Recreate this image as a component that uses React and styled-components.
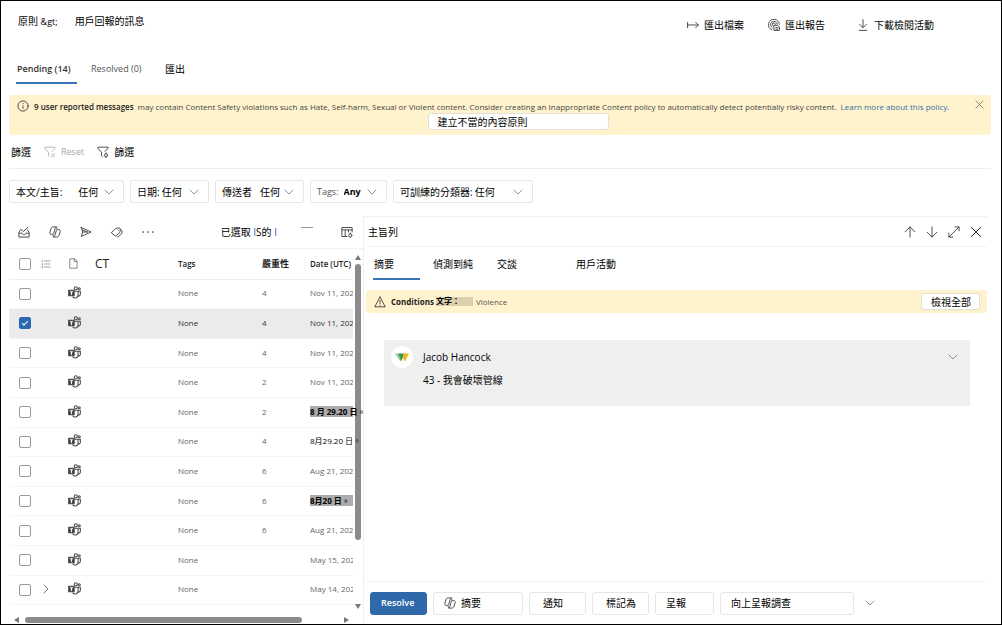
import React, { useState } from 'react';
import styled, { createGlobalStyle, css } from 'styled-components';

const GlobalStyle = createGlobalStyle`
  *, *::before, *::after { box-sizing: border-box; }
  body {
    margin: 0;
    background: #fff;
    color: #000;
    font: 400 10px/14px "Open Sans", "Noto Sans CJK TC", sans-serif;
  }
  button, input, select { font: inherit; color: inherit; }
`;

/* ---------- icons ---------- */

const Svg = styled.svg`
  display: block;
  flex: none;
  width: ${(p) => p.$size || 12}px;
  height: ${(p) => p.$size || 12}px;
  fill: none;
  stroke: ${(p) => p.$color || '#484848'};
  stroke-width: ${(p) => p.$weight || 1.6};
  stroke-linecap: round;
  stroke-linejoin: round;
`;

const Icon = ({ size, color, weight, children }) => (
  <Svg viewBox="0 0 20 20" $size={size} $color={color} $weight={weight} aria-hidden="true">
    {children}
  </Svg>
);

const ChevronDown = (p) => <Icon size={10} color="#777" {...p}><path d="M2 6l8 8 8-8" /></Icon>;
const ChevronRight = (p) => <Icon size={10} color="#555" {...p}><path d="M6 2l8 8-8 8" /></Icon>;
const CloseIcon = (p) => <Icon {...p}><path d="M2 2l16 16M18 2 2 18" /></Icon>;
const ArrowUp = (p) => <Icon {...p}><path d="M10 18.500V1.500M2 9.500l8-8 8 8" /></Icon>;
const ArrowDown = (p) => <Icon {...p}><path d="M10 1.500v17M2 10.500l8 8 8-8" /></Icon>;
const ExpandIcon = (p) => <Icon {...p}><path d="M2 18 18 2M12 1.500h6.500V8M1.500 12v6.500H8" /></Icon>;
const ExportIcon = (p) => <Icon {...p}><path d="M1 5.500v9M1 10h18M14.500 5.500 19 10l-4.500 4.500" /></Icon>;
const DownloadIcon = (p) => <Icon {...p}><path d="M10 1v13M4.500 9l5.500 5.500L15.500 9M4 19h12" /></Icon>;
const InfoIcon = (p) => <Icon {...p}><circle cx="10" cy="10" r="8.500" /><path d="M10 9.500v4.500M10 6v.3" /></Icon>;
const WarningIcon = (p) => (
  <Icon {...p}><path d="M10 1.800 18.800 18H1.200L10 1.800ZM10 7.500v5M10 15.200v.3" /></Icon>
);
const ReportIcon = (p) => (
  <Icon {...p}>
    <path d="M6.500 18A9 9 0 1 1 18.800 9M6.800 14.500A5.800 5.800 0 1 1 15.600 8.500M9 11.500A2.600 2.600 0 1 1 12.300 9" />
    <path d="M10.500 10.500h5.500l3 3V19h-8.500zM13 14.500h3.500M13 17h3.500" />
  </Icon>
);
const FilterIcon = ({ reset, ...p }) => (
  <Icon {...p}>
    <path d="M9 17.500 7.500 16v-5.500L1.500 4V2h17v2L13 9" />
    {reset ? <path d="M12.500 13l5 5M17.500 13l-5 5" /> : (
      <><circle cx="15" cy="15.500" r="2.600" /><path d="M15 11.500v1.400M15 18.100v1.400" /></>
    )}
  </Icon>
);
const InboxIcon = (p) => (
  <Icon {...p}>
    <path d="M4 6.500 1.500 11v7.500h17V11L16 6.500M1.500 12H7c.5 1.700 1.500 2.500 3 2.500s2.500-.8 3-2.500h5.500M5 5.500 9 9.500 16.500 2" />
  </Icon>
);
const CopilotIcon = (p) => (
  <Icon {...p}>
    <path d="M13.500 6 13 4C12.600 2.400 11.800 1.500 10.200 1.500H7C5 1.500 3.900 2.600 3.200 4.800L1.500 10.200C.8 12.600 1.800 14 4 14h1.200c1.500 0 2.300-.7 2.800-2.400l2.300-7.400c.5-1.700 1.200-2.700 2.700-2.700" />
    <path d="M6.500 14 7 16c.4 1.600 1.200 2.500 2.800 2.500H13c2 0 3.100-1.100 3.800-3.300l1.700-5.400C19.200 7.400 18.200 6 16 6h-1.200c-1.500 0-2.300.7-2.800 2.400l-2.300 7.400c-.5 1.700-1.200 2.700-2.700 2.700" />
  </Icon>
);
const SendIcon = (p) => <Icon {...p}><path d="M2 2.500 18.500 10 2 17.500 4.500 10 2 2.500ZM4.500 10h8M4 6.500l8 3.500" /></Icon>;
const TagIcon = (p) => (
  <Icon {...p}>
    <path d="M1.200 10.500 8 4l6-.8 1.500 1.300-.5 6-6.300 6c-.5.500-1.200.5-1.700 0L1.200 12c-.4-.4-.4-1 0-1.500Z" />
    <path d="M16 5.500l2.500 2.500-.5 4.500-5.500 5.200c-.8.600-1.600.600-2.300 0" /><path d="M12 6.800v.3" />
  </Icon>
);
const MoreIcon = (p) => <Icon {...p}><path d="M2 10h.1M10 10h.1M18 10h.1" /></Icon>;
const ColumnsIcon = (p) => (
  <Icon {...p}>
    <path d="M10 17.500H1.500v-15h17V10M1.500 6.500h17M7 6.500v11M12.500 6.500V10" />
    <circle cx="15.500" cy="15.500" r="2.600" /><path d="M15.500 11.700v1M15.500 18.300v1" />
  </Icon>
);
const ListIcon = (p) => <Icon {...p}><path d="M7 4h11M7 10h11M7 16h11M2.500 2.500v3M2 9.500h1v2H2M2 15h1.500v2.500H2" /></Icon>;
const FileIcon = (p) => <Icon {...p}><path d="M4 1.500h8l4.500 4.500v12.500H4zM11.500 1.500v5h5" /></Icon>;
const TeamsIcon = (p) => (
  <Icon {...p}>
    <circle cx="12" cy="3.500" r="2.400" /><circle cx="17.300" cy="4.300" r="1.600" />
    <path d="M10.500 8h5v6.500a4.500 4.500 0 0 1-8 2.300M15.500 8H19v4.500a3 3 0 0 1-3.500 3" />
    <path d="M1 6.500h8.500V15H1z" fill="#444" /><path d="M3.500 9h3.600M5.300 9v4" stroke="#fff" />
  </Icon>
);

/* ---------- page ---------- */

const Page = styled.div`
  min-height: 100vh;
  display: flex;
  flex-direction: column;
  border: 1px solid #000;
  padding: 0 10px 0 8px;
`;

const PageHeader = styled.header`
  display: flex;
  align-items: flex-start;
  justify-content: space-between;
  height: 54px;
  padding: 13px 57px 0 9px;
`;

const Breadcrumb = styled.nav`
  display: flex;
  gap: 17px;
`;

const CrumbLink = styled.a`
  color: inherit;
  text-decoration: none;
`;

const Separator = styled.span`
  font-size: 9px;
`;

const HeaderActions = styled.div`
  display: flex;
  gap: 24px;
  padding-top: 4px;
  > :last-child { margin-left: 8px; }
`;

const PlainButton = styled.button`
  display: inline-flex;
  align-items: center;
  gap: 5px;
  padding: 0;
  border: 0;
  background: none;
  color: ${(p) => (p.$muted ? '#a6a6a6' : '#000')};
  font-size: ${(p) => (p.$muted ? 9 : 10)}px;
  white-space: nowrap;
  cursor: pointer;
`;

const Tabs = styled.div`
  display: flex;
  gap: ${(p) => p.$gap}px;
  padding-left: 7px;
`;

const Tab = styled.button`
  padding: 0 1px;
  height: ${(p) => p.$height}px;
  min-width: ${(p) => p.$min || 0}px;
  border: 0;
  border-bottom: 2px solid ${(p) => (p['aria-selected'] ? '#3a75b5' : 'transparent')};
  background: none;
  text-align: left;
  font-size: ${(p) => (p.$latin ? 9 : 10)}px;
  font-weight: ${(p) => (p.$latin && p['aria-selected'] ? 600 : 400)};
  color: ${(p) => (!p.$latin ? '#000' : p['aria-selected'] ? '#333' : '#555')};
  cursor: pointer;
`;

const Notice = styled.section`
  display: flex;
  align-items: flex-start;
  margin-top: 11px;
  height: 40px;
  padding: 5px 7px 0 8px;
  gap: 5px;
  border-radius: 3px;
  background: #fff3cd;
  color: #444;
  font-size: 8px;
  white-space: nowrap;
`;

const NoticeBody = styled.div`
  flex: 1;
  display: flex;
  flex-direction: column;
  align-items: center;
`;

const NoticeText = styled.p`
  display: flex;
  gap: 4px;
  align-self: flex-start;
  height: 13px;
  margin: 0;
  strong { font-weight: 600; color: #222; }
  a { color: #3a6ea5; text-decoration: none; }
`;

const WhiteButton = styled.button`
  height: 17px;
  width: ${(p) => p.$width}px;
  padding: 0 0 0 9px;
  border: 1px solid #e3e0d8;
  border-radius: 3px;
  background: #fff;
  font-size: 10px;
  line-height: 14px;
  color: #000;
  text-align: left;
  cursor: pointer;
`;

const CreateButton = styled(WhiteButton)`
  margin-left: 32px;
`;

const FilterBar = styled.div`
  display: flex;
  align-items: center;
  gap: 13px;
  height: 34px;
  padding-left: 2px;
  border-bottom: 1px solid #eee;
`;

const Pills = styled.div`
  display: flex;
  gap: 6px;
  padding: 11px 0 13px;
`;

const Pill = styled.label`
  display: flex;
  align-items: center;
  width: ${(p) => p.$width}px;
  height: 23px;
  padding: 0 9px 0 6px;
  border: 1px solid #e6e6e6;
  border-radius: 2px;
  white-space: nowrap;
  color: ${(p) => (p.$latin ? '#555' : '#000')};
  font-size: ${(p) => (p.$latin ? 9 : 10)}px;
  svg { margin-left: auto; }
`;

const PillSelect = styled.select`
  appearance: none;
  margin-left: ${(p) => p.$gap}px;
  padding: 0;
  border: 0;
  background: none;
  color: #000;
  font-weight: ${(p) => (p.$bold ? 700 : 400)};
`;

const Split = styled.main`
  flex: 1;
  display: grid;
  grid-template-columns: 354px minmax(0, 1fr);
  margin-right: 4px;
`;

/* ---------- message list ---------- */

const ListPane = styled.section`
  display: flex;
  flex-direction: column;
`;

const ListToolbar = styled.div`
  display: flex;
  align-items: center;
  gap: 19px;
  height: 33px;
  padding: 0 10px 0 9px;
  border-bottom: 1px solid #f0f0f0;
`;

const SelectedCount = styled.span`
  margin-left: auto;
  b { font-weight: 400; color: #1a62b8; }
`;

const GroupMark = styled.span`
  align-self: flex-start;
  width: 12px;
  height: 1px;
  margin: 11px 9px 0 5px;
  background: #999;
`;

const ListArea = styled.div`
  flex: 1;
  display: grid;
  grid-template-columns: minmax(0, 1fr) 10px;
`;

const Table = styled.table`
  width: 100%;
  height: 100%;
  table-layout: fixed;
  border-collapse: collapse;
  font-size: 8px;
  line-height: 11px;
  color: #666;
`;

const Col = styled.col`
  width: ${(p) => p.$width}px;
`;

const HeadCell = styled.th`
  height: 30px;
  padding: 0;
  border-bottom: 1px solid #eee;
  color: #222;
  font-size: ${(p) => (p.$large ? 12 : p.$cjk ? 9 : 8)}px;
  font-weight: ${(p) => (p.$large ? 400 : p.$cjk ? 700 : 600)};
  text-align: left;
  white-space: nowrap;
  padding-left: ${(p) => (p.$lead ? 10 : 0)}px;
`;

const Row = styled.tr`
  background: ${(p) => (p.$selected ? '#ebebeb' : 'transparent')};
  color: ${(p) => (p.$selected ? '#333' : 'inherit')};
`;

const Cell = styled.td`
  height: 29px;
  padding: 0;
  padding-left: ${(p) => (p.$lead ? 10 : 0)}px;
  padding-bottom: ${(p) => (p.$lead ? 0 : 2)}px;
  border-bottom: 1px solid #f6f6f6;
  white-space: nowrap;
`;

const PeekCell = styled.td`
  height: 7px;
  padding: 0;
`;

const DateText = styled.span`
  display: block;
  overflow: hidden;
  ${(p) => p.$variant && css`
    position: relative;
    z-index: 1;
    overflow: visible;
    color: #000;
    font-weight: ${p.$variant === 'marked' ? 700 : 400};
    background: ${p.$variant === 'marked' ? '#acacac' : 'none'};
  `}
`;

const Checkbox = styled.input`
  appearance: none;
  display: grid;
  place-items: center;
  width: 12px;
  height: 12px;
  margin: 0;
  border: 1px solid #999;
  border-radius: 2px;
  background: #fff;
  &:checked { background: #2b68b0; border-color: #2b68b0; }
  &:checked::after {
    content: '';
    width: 6px;
    height: 3px;
    margin-top: -2px;
    border: solid #fff;
    border-width: 0 0 1px 1px;
    transform: rotate(-45deg);
  }
`;

const VScroll = styled.div`
  display: flex;
  flex-direction: column;
  align-items: center;
  gap: 4px;
  padding: 6px 0 3px;
`;

const VThumb = styled.div`
  flex: 0 0 78%;
  width: 6px;
  border-radius: 3px;
  background: #8b8b8b;
`;

const HScroll = styled.div`
  display: flex;
  align-items: center;
  gap: 6px;
  height: 12px;
  padding: 3px 14px 0 5px;
`;

const HThumb = styled.div`
  flex: 0 0 277px;
  height: 6px;
  border-radius: 3px;
  background: #8b8b8b;
`;

const Arrow = styled.i`
  width: 0;
  height: 0;
  border: 3px solid transparent;
  ${(p) => p.$dir === 'up' && css`border-top: 0; border-bottom: 5px solid #777;`}
  ${(p) => p.$dir === 'down' && css`margin-top: auto; border-bottom: 0; border-top: 5px solid #777;`}
  ${(p) => p.$dir === 'left' && css`border-left: 0; border-right: 5px solid #777;`}
  ${(p) => p.$dir === 'right' && css`margin-left: auto; border-right: 0; border-left: 5px solid #777;`}
`;

/* ---------- detail pane ---------- */

const DetailPane = styled.section`
  display: flex;
  flex-direction: column;
  border: solid #f0f0f0;
  border-width: 1px 0 0 1px;
`;

const DetailHeader = styled.div`
  display: flex;
  align-items: center;
  gap: 10px;
  height: 30px;
  margin: 0 0 0 4px;
  padding-right: 5px;
  border-bottom: 1px solid #f2f2f2;
`;

const Title = styled.h1`
  flex: 1;
  margin: 0;
  font-size: 10px;
  font-weight: 400;
`;

const DetailTabs = styled(Tabs)`
  margin-top: 2px;
  padding-left: 9px;
`;

const Conditions = styled.div`
  display: flex;
  align-items: center;
  gap: 2px;
  height: 23px;
  margin: 10px 0 0 2px;
  padding: 0 7px 0 8px;
  border-radius: 3px;
  background: #fff3cd;
  color: #555;
  font-size: 8px;
  strong { margin-left: 3px; font-weight: 700; color: #222; }
  button { margin-left: auto; }
`;

const Marked = styled.span`
  width: 37px;
  height: 9px;
  margin-right: 1px;
  background: #dccfae;
  color: #000;
  font-weight: 700;
  line-height: 8px;
`;

const MessageCard = styled.article`
  display: grid;
  grid-template-columns: 22px 1fr auto;
  column-gap: 10px;
  align-items: center;
  align-content: start;
  row-gap: 5px;
  height: 66px;
  margin: 27px 17px 0 20px;
  padding: 6px 12px 0 7px;
  background: #efefef;
`;

const Avatar = styled.span`
  display: grid;
  place-items: center;
  width: 22px;
  height: 22px;
  border-radius: 50%;
  background: #fff;
`;

const Message = styled.p`
  grid-column: 2;
  margin: 0;
`;

const Footer = styled.footer`
  display: flex;
  align-items: center;
  gap: 6px;
  height: 43px;
  margin-top: auto;
  margin-left: 2px;
  padding-left: 4px;
  border-top: 1px solid #f2f2f2;
`;

const FooterButton = styled.button`
  display: flex;
  align-items: center;
  gap: 5px;
  width: ${(p) => p.$width}px;
  height: 23px;
  padding: 0 10px;
  padding-left: ${(p) => p.$inset || 10}px;
  border: 1px solid ${(p) => (p.$primary ? '#2f69a9' : '#e6e6e6')};
  border-radius: 3px;
  background: ${(p) => (p.$primary ? '#2f69a9' : '#fff')};
  color: ${(p) => (p.$primary ? '#fff' : '#000')};
  font-size: ${(p) => (p.$primary ? 9 : 10)}px;
  font-weight: ${(p) => (p.$primary ? 600 : 400)};
  white-space: nowrap;
  cursor: pointer;
`;

const ChevronButton = styled(PlainButton)`
  margin-left: 5px;
`;

const PILLS = [
  { label: '本文/主旨:', value: '任何', width: 115, gap: 16 },
  { label: '日期:', value: '任何', width: 79, gap: 2 },
  { label: '傳送者', value: '任何', width: 89, gap: 8 },
  { label: 'Tags:', value: 'Any', width: 77, gap: 5, latin: true },
  { label: '可訓練的分類器:', value: '任何', width: 140, gap: 2 },
];

const ROWS = [
  { severity: '4', date: 'Nov 11, 2023' },
  { severity: '4', date: 'Nov 11, 2023' },
  { severity: '4', date: 'Nov 11, 2023' },
  { severity: '2', date: 'Nov 11, 2023' },
  { severity: '2', date: '8 月 29.20 日。', variant: 'marked' },
  { severity: '4', date: '8月29.20 日。', variant: 'plain' },
  { severity: '6', date: 'Aug 21, 2023' },
  { severity: '6', date: '8月20 日。', variant: 'marked' },
  { severity: '6', date: 'Aug 21, 2023' },
  { severity: '', date: 'May 15, 2023' },
  { severity: '', date: 'May 14, 2023', expandable: true },
];

export default function App() {
  const [selected, setSelected] = useState([1]);
  const toggle = (i) =>
    setSelected((s) => (s.includes(i) ? s.filter((n) => n !== i) : [...s, i]));

  return (
    <>
      <GlobalStyle />
      <Page>
        <PageHeader>
          <Breadcrumb aria-label="breadcrumb">
            <CrumbLink href="#policies">原則 <Separator>&amp;gt;</Separator></CrumbLink>
            <span>用戶回報的訊息</span>
          </Breadcrumb>
          <HeaderActions>
            <PlainButton><ExportIcon />匯出檔案</PlainButton>
            <PlainButton><ReportIcon />匯出報告</PlainButton>
            <PlainButton><DownloadIcon />下載檢閱活動</PlainButton>
          </HeaderActions>
        </PageHeader>

        <Tabs role="tablist" $gap={13}>
          <Tab role="tab" aria-selected $latin $height={29} $min={61}>Pending (14)</Tab>
          <Tab role="tab" aria-selected={false} $latin $height={29} $min={61}>Resolved (0)</Tab>
          <Tab role="tab" aria-selected={false} $height={29}>匯出</Tab>
        </Tabs>

        <Notice>
          <InfoIcon />
          <NoticeBody>
            <NoticeText>
              <strong>9 user reported messages</strong>
              <span>may contain Content Safety violations such as Hate, Self-harm, Sexual or Violent content. Consider creating an Inappropriate Content policy to automatically detect potentially risky content.</span>
              <a href="#policy">Learn more about this policy.</a>
            </NoticeText>
            <CreateButton $width={181}>建立不當的內容原則</CreateButton>
          </NoticeBody>
          <PlainButton aria-label="Dismiss"><CloseIcon size={9} color="#666" /></PlainButton>
        </Notice>

        <FilterBar>
          <span>篩選</span>
          <PlainButton $muted><FilterIcon reset color="#b5b5b5" />Reset</PlainButton>
          <PlainButton><FilterIcon />篩選</PlainButton>
        </FilterBar>

        <Pills>
          {PILLS.map((p) => (
            <Pill key={p.label} $width={p.width} $latin={p.latin}>
              {p.label}
              <PillSelect $gap={p.gap} $bold={p.latin}><option>{p.value}</option></PillSelect>
              <ChevronDown />
            </Pill>
          ))}
        </Pills>

        <Split>
          <ListPane>
            <ListToolbar>
              <PlainButton aria-label="Resolve"><InboxIcon /></PlainButton>
              <PlainButton aria-label="Summarize"><CopilotIcon /></PlainButton>
              <PlainButton aria-label="Notify"><SendIcon /></PlainButton>
              <PlainButton aria-label="Tag as"><TagIcon /></PlainButton>
              <PlainButton aria-label="More"><MoreIcon weight={2.8} /></PlainButton>
              <SelectedCount>已選取 <b>I</b>S的 <b>I</b></SelectedCount>
              <GroupMark />
              <PlainButton aria-label="Customize columns"><ColumnsIcon /></PlainButton>
            </ListToolbar>
            <ListArea>
              <Table>
                <colgroup>
                  <Col $width={32} />
                  <Col $width={27} />
                  <Col $width={27} />
                  <Col $width={83} />
                  <Col $width={84} />
                  <Col $width={48} />
                  <Col />
                </colgroup>
                <thead>
                  <tr>
                    <HeadCell $lead><Checkbox type="checkbox" aria-label="Select all" /></HeadCell>
                    <HeadCell><ListIcon size={10} color="#888" /></HeadCell>
                    <HeadCell><FileIcon size={11} color="#777" /></HeadCell>
                    <HeadCell $large>CT</HeadCell>
                    <HeadCell>Tags</HeadCell>
                    <HeadCell $cjk>嚴重性</HeadCell>
                    <HeadCell>Date (UTC)</HeadCell>
                  </tr>
                </thead>
                <tbody>
                  {ROWS.map((r, i) => (
                    <Row key={i} $selected={selected.includes(i)}>
                      <Cell $lead>
                        <Checkbox
                          type="checkbox"
                          aria-label={`Select item ${i + 1}`}
                          checked={selected.includes(i)}
                          onChange={() => toggle(i)}
                        />
                      </Cell>
                      <Cell>{r.expandable && <ChevronRight />}</Cell>
                      <Cell><TeamsIcon size={13} /></Cell>
                      <Cell />
                      <Cell>None</Cell>
                      <Cell>{r.severity}</Cell>
                      <Cell><DateText $variant={r.variant}>{r.date}</DateText></Cell>
                    </Row>
                  ))}
                  <tr><PeekCell colSpan={7} /></tr>
                </tbody>
              </Table>
              <VScroll aria-hidden="true">
                <Arrow $dir="up" /><VThumb /><Arrow $dir="down" />
              </VScroll>
            </ListArea>
            <HScroll aria-hidden="true">
              <Arrow $dir="left" /><HThumb /><Arrow $dir="right" />
            </HScroll>
          </ListPane>

          <DetailPane>
            <DetailHeader>
              <Title>主旨列</Title>
              <PlainButton aria-label="Previous"><ArrowUp /></PlainButton>
              <PlainButton aria-label="Next"><ArrowDown /></PlainButton>
              <PlainButton aria-label="Expand"><ExpandIcon /></PlainButton>
              <PlainButton aria-label="Close"><CloseIcon color="#222" /></PlainButton>
            </DetailHeader>
            <DetailTabs role="tablist" $gap={12}>
              <Tab role="tab" aria-selected $height={31} $min={47}>摘要</Tab>
              <Tab role="tab" aria-selected={false} $height={31} $min={52}>偵測到純</Tab>
              <Tab role="tab" aria-selected={false} $height={31} $min={67}>交談</Tab>
              <Tab role="tab" aria-selected={false} $height={31}>用戶活動</Tab>
            </DetailTabs>
            <Conditions>
              <WarningIcon />
              <strong>Conditions</strong>
              <Marked>文字：</Marked>
              <span>Violence</span>
              <WhiteButton $width={59}>檢視全部</WhiteButton>
            </Conditions>
            <MessageCard>
              <Avatar>
                <svg width="14" height="9" viewBox="0 0 28 18" aria-hidden="true">
                  <path d="M0 1h11l5 8-5 8z" fill="#8cc79a" />
                  <path d="M7 1h12l-6.500 15z" fill="#2e9b57" />
                  <path d="M17 1h11l-8 16-5-7z" fill="#f5b324" />
                </svg>
              </Avatar>
              <span>Jacob Hancock</span>
              <PlainButton aria-label="Expand message"><ChevronDown /></PlainButton>
              <Message>43 - 我會破壞管線</Message>
            </MessageCard>
            <Footer>
              <FooterButton $primary $width={57}>Resolve</FooterButton>
              <FooterButton $width={90}><CopilotIcon />摘要</FooterButton>
              <FooterButton $width={57} $inset={13}>通知</FooterButton>
              <FooterButton $width={57} $inset={13}>標記為</FooterButton>
              <FooterButton $width={59}>呈報</FooterButton>
              <FooterButton $width={134}>向上呈報調查</FooterButton>
              <ChevronButton aria-label="More actions"><ChevronDown /></ChevronButton>
            </Footer>
          </DetailPane>
        </Split>
      </Page>
    </>
  );
}
